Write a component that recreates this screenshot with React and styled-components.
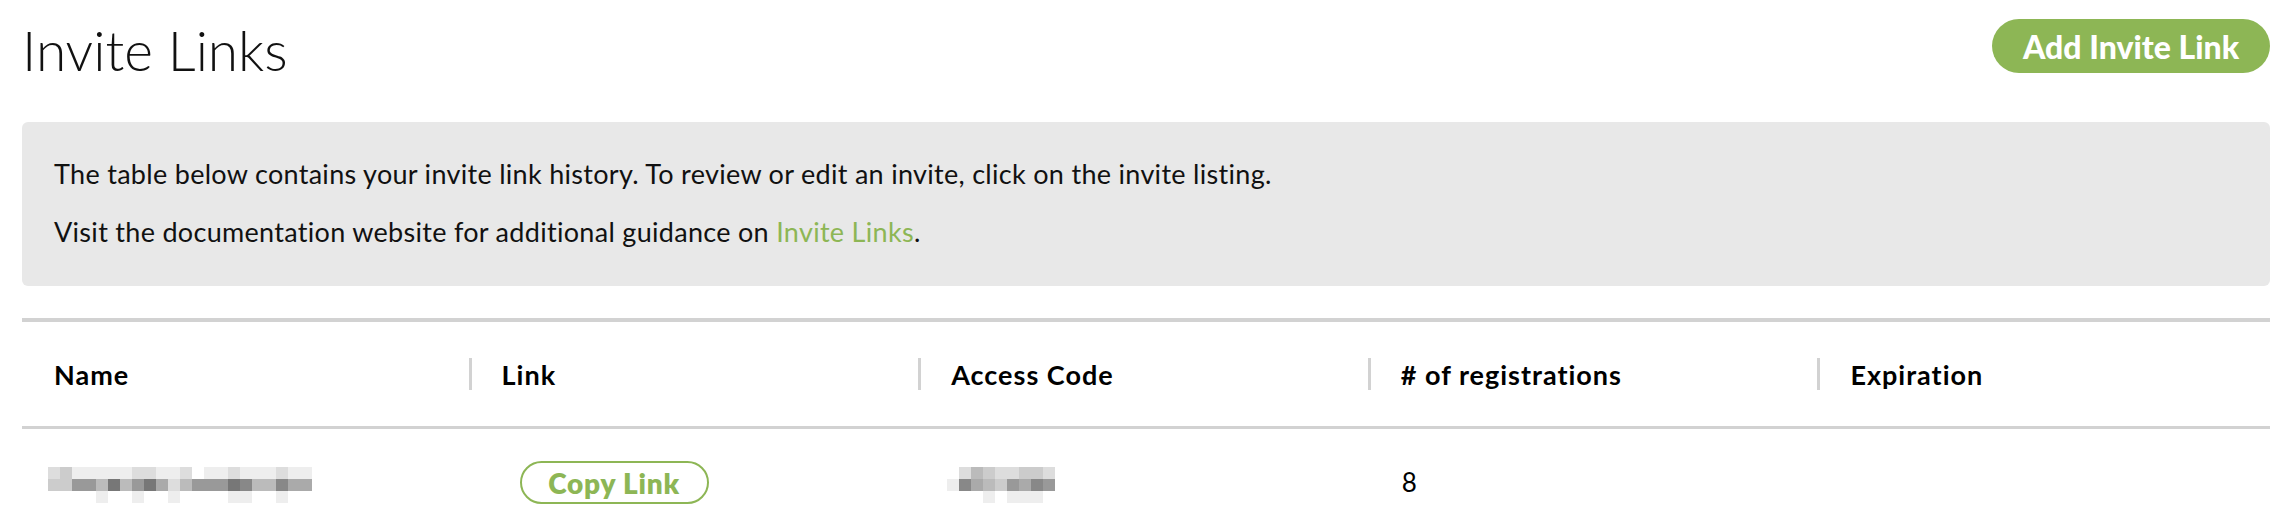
import React from "react";
import styled, { createGlobalStyle } from "styled-components";

const GREEN = "#8db655";
const LINE = "#d2d2d2";

const GlobalStyle = createGlobalStyle`
  html, body { margin: 0; padding: 0; background: #fff; }
  body { font-family: Lato, "Liberation Sans", sans-serif; color: #111; }
  * { box-sizing: border-box; }
`;

const Page = styled.div`
  padding: 0 14px 0 22px;
`;

const Header = styled.header`
  height: 122px;
  padding-top: 17px;
  display: flex;
  justify-content: space-between;
  align-items: flex-start;
`;

const Title = styled.h1`
  margin: 0;
  font-weight: 300;
  font-size: 55px;
  line-height: 1.2;
  color: #111;
`;

const PrimaryButton = styled.button`
  width: 278px;
  height: 54px;
  margin-top: 2px;
  border: none;
  border-radius: 27px;
  background: ${GREEN};
  color: #fff;
  font-family: Lato, "Liberation Sans", sans-serif;
  font-weight: 900;
  font-size: 32px;
  cursor: pointer;
`;

const InfoBox = styled.section`
  background: #e8e8e8;
  border-radius: 6px;
  padding: 36px 32px 37px;
  display: flex;
  flex-direction: column;
  gap: 26px;
`;

const InfoText = styled.p`
  margin: 0;
  font-size: 27px;
  letter-spacing: 0.3px;
  line-height: 1.2;
  color: #111;
`;

const DocLink = styled.a`
  color: ${GREEN};
  text-decoration: none;
`;

const Table = styled.table`
  width: 100%;
  margin-top: 32px;
  border-collapse: collapse;
  table-layout: fixed;
  border-top: 4px solid ${LINE};
`;

const HeadCell = styled.th`
  height: 108px;
  padding: 0;
  text-align: left;
  vertical-align: middle;
  border-bottom: 3px solid ${LINE};
`;

const HeadLabel = styled.div`
  height: 32px;
  display: flex;
  align-items: center;
  margin-left: ${(p) => (p.$divider ? "-3px" : "0")};
  padding-left: ${(p) => (p.$divider ? "30px" : "32px")};
  border-left: ${(p) => (p.$divider ? `3px solid ${LINE}` : "none")};
  font-size: 27px;
  letter-spacing: 1px;
  font-weight: 700;
  color: #000;
`;

const BodyCell = styled.td`
  height: 106px;
  padding: 0 0 0 ${(p) => p.$pad || 32}px;
  vertical-align: middle;
  font-size: 26px;
  color: #000;
`;

const CopyButton = styled.button`
  width: 189px;
  height: 43px;
  margin-left: 16px;
  margin-top: 2px;
  border: 2px solid ${GREEN};
  border-radius: 22px;
  background: #fff;
  color: ${GREEN};
  font-family: Lato, "Liberation Sans", sans-serif;
  font-weight: 800;
  font-size: 28px;
  letter-spacing: 0.8px;
  cursor: pointer;
`;

const Mosaic = styled.div`
  display: grid;
  grid-template-columns: repeat(${(p) => p.$cols}, 12px);
  grid-auto-rows: 12px;
  width: max-content;
  margin-top: 6px;
`;

const Pixel = styled.span`
  display: block;
`;

const hex = (c) => {
  const v = parseInt(c, 16) * 17;
  return `rgb(${v},${v},${v})`;
};

function Blur({ rows }) {
  const cols = rows[0].length;
  return (
    <Mosaic $cols={cols} aria-hidden="true">
      {rows.flatMap((r, i) =>
        r.split("").map((c, j) => (
          <Pixel key={`${i}-${j}`} style={{ background: hex(c) }} />
        ))
      )}
    </Mosaic>
  );
}

const NAME_BLUR = [
  "dceeeeeddeedfeedeeedee",
  "cc99b7b97adb99978bb8aa",
  "ffffeffeffeffffeeffeff",
];
const CODE_BLUR = [
  "fdbcddccd",
  "e8abc9a89",
  "fffefeeef",
];

const columns = ["Name", "Link", "Access Code", "# of registrations", "Expiration"];

export default function App() {
  return (
    <>
      <GlobalStyle />
      <Page>
        <Header>
          <Title>Invite Links</Title>
          <PrimaryButton>Add Invite Link</PrimaryButton>
        </Header>
        <InfoBox>
          <InfoText>
            The table below contains your invite link history. To review or edit an invite, click on the invite listing.
          </InfoText>
          <InfoText>
            Visit the documentation website for additional guidance on <DocLink href="#">Invite Links</DocLink>.
          </InfoText>
        </InfoBox>
        <Table>
          <thead>
            <tr>
              {columns.map((c, i) => (
                <HeadCell key={c}>
                  <HeadLabel $divider={i > 0}>{c}</HeadLabel>
                </HeadCell>
              ))}
            </tr>
          </thead>
          <tbody>
            <tr>
              <BodyCell $pad={26}>
                <Blur rows={NAME_BLUR} />
              </BodyCell>
              <BodyCell>
                <CopyButton>Copy Link</CopyButton>
              </BodyCell>
              <BodyCell $pad={26}>
                <Blur rows={CODE_BLUR} />
              </BodyCell>
              <BodyCell $pad={31}>8</BodyCell>
              <BodyCell />
            </tr>
          </tbody>
        </Table>
      </Page>
    </>
  );
}
